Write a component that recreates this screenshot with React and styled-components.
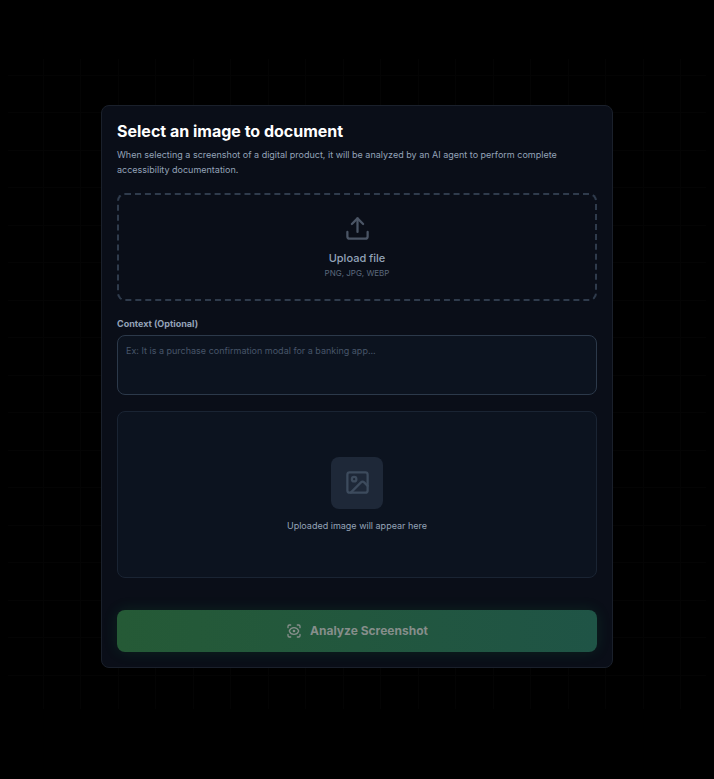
import { useState } from "react";
import styled, { createGlobalStyle } from "styled-components";
import { Upload, Image, ScanEye } from "lucide-react";

const GlobalStyle = createGlobalStyle`
  * {
    box-sizing: border-box;
  }

  body {
    margin: 0;
    background-color: #000000;
    font-family: Inter, "Liberation Sans", sans-serif;
  }
`;

const Container = styled.div`
  min-height: 100vh;
  padding: 59px 8px 70px;
  display: flex;
`;

const Stage = styled.main`
  flex: 1;
  display: flex;
  align-items: flex-start;
  justify-content: center;
  padding: 46px 16px 40px;
  background-image:
    linear-gradient(to right, #040404 1px, transparent 1px),
    linear-gradient(to right, #040404 1px, transparent 1px),
    linear-gradient(#040404 1px, transparent 1px),
    linear-gradient(#040404 1px, transparent 1px);
  background-size: 75px 75px;
  background-position: 35px 0, 72px 0, 0 16px, 0 53px;
`;

const Card = styled.form`
  width: 100%;
  max-width: 512px;
  padding: 15px;
  display: flex;
  flex-direction: column;
  border: 1px solid #1a202b;
  border-radius: 8px;
  background-color: rgba(10, 14, 25, 0.97);
`;

const Title = styled.h1`
  margin: 0 0 6px;
  font-size: 16px;
  line-height: 20px;
  font-weight: 700;
  color: #ffffff;
`;

const Description = styled.p`
  margin: 0 0 16px;
  font-size: 9px;
  line-height: 15px;
  color: #94a3b8;
`;

const DropZone = styled.button`
  height: 108px;
  margin-bottom: 16px;
  padding: 0;
  display: flex;
  flex-direction: column;
  align-items: center;
  justify-content: center;
  border: 2px dashed #2f3b4c;
  border-radius: 8px;
  background-color: transparent;
  font-family: inherit;
  color: #4b5565;
  cursor: pointer;
`;

const DropTitle = styled.span`
  margin-top: 8px;
  font-size: 11px;
  line-height: 16px;
  font-weight: 500;
  color: #94a3b8;
`;

const DropHint = styled.span`
  font-size: 8px;
  line-height: 14px;
  color: #5b687c;
`;

const Label = styled.label`
  margin-bottom: 4px;
  font-size: 9px;
  line-height: 14px;
  font-weight: 700;
  color: #94a3b8;
`;

const TextArea = styled.textarea`
  height: 60px;
  margin-bottom: 16px;
  padding: 8px;
  border: 1px solid #2c394a;
  border-radius: 8px;
  background-color: #0c131f;
  font-family: inherit;
  font-size: 9px;
  line-height: 14px;
  color: #e2e8f0;
  resize: none;

  &::placeholder {
    color: #475569;
    opacity: 1;
  }
`;

const Preview = styled.div`
  height: 167px;
  margin-bottom: 32px;
  display: flex;
  flex-direction: column;
  align-items: center;
  justify-content: center;
  gap: 10px;
  border: 1px solid #1a2433;
  border-radius: 8px;
  background-color: #0c131f;
  font-size: 9px;
  line-height: 14px;
  color: #94a3b8;
`;

const PreviewIcon = styled.div`
  width: 52px;
  height: 52px;
  display: flex;
  align-items: center;
  justify-content: center;
  border-radius: 8px;
  background-color: #1e2838;
  color: #3d4b5d;
`;

const Button = styled.button`
  height: 42px;
  display: flex;
  align-items: center;
  justify-content: center;
  gap: 8px;
  border: none;
  border-radius: 8px;
  background-image: linear-gradient(to right, #255a36, #1f5446);
  box-shadow: 0 0 15px rgba(34, 197, 94, 0.12);
  font-family: inherit;
  font-size: 12px;
  line-height: 18px;
  font-weight: 700;
  color: #868e8b;
`;

const App = () => {
  const [context, setContext] = useState("");

  return (
    <>
      <GlobalStyle />
      <Container>
        <Stage>
          <Card onSubmit={(e) => e.preventDefault()}>
            <Title>Select an image to document</Title>
            <Description>
              When selecting a screenshot of a digital product, it will be analyzed by an AI agent to perform complete
              accessibility documentation.
            </Description>
            <DropZone type="button">
              <Upload size={27} strokeWidth={2} />
              <DropTitle>Upload file</DropTitle>
              <DropHint>PNG, JPG, WEBP</DropHint>
            </DropZone>
            <Label htmlFor="context">Context (Optional)</Label>
            <TextArea
              id="context"
              value={context}
              placeholder="Ex: It is a purchase confirmation modal for a banking app..."
              onChange={(e) => setContext(e.target.value)}
            />
            <Preview>
              <PreviewIcon>
                <Image size={27} strokeWidth={2} />
              </PreviewIcon>
              <span>Uploaded image will appear here</span>
            </Preview>
            <Button type="submit" disabled>
              <ScanEye size={16} />
              Analyze Screenshot
            </Button>
          </Card>
        </Stage>
      </Container>
    </>
  );
};

export default App;
